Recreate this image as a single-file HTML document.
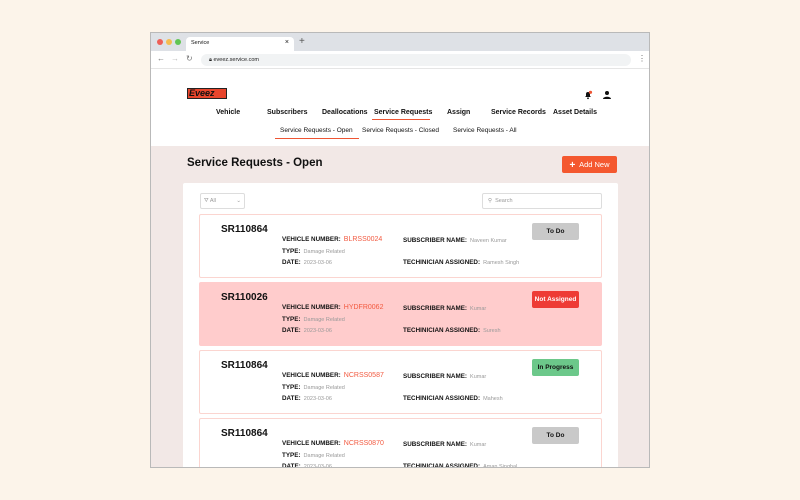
<!DOCTYPE html>
<html><head><meta charset="utf-8"><style>
*{margin:0;padding:0;box-sizing:border-box}
body{width:800px;height:500px;background:#fcf4ea;font-family:"Liberation Sans",sans-serif;position:relative;overflow:hidden;color:#111}
.a{position:absolute}
.win{left:150px;top:32px;width:500px;height:436px;border:1px solid #b9b9b9;background:#fff;overflow:hidden}
.nav{font-size:7px;font-weight:bold;top:76px}
.sub{font-size:6.5px;top:94px}
.card{left:48px;width:403px;height:64px;border:1px solid #fbd5d0;background:#fff;border-radius:2px}
.card .id{left:21px;top:9px;font-size:10px;font-weight:bold}
.l{font-size:6.3px;font-weight:bold}
.v{font-weight:normal;color:#999;font-size:5.5px;margin-left:3px}
.r{font-weight:normal;color:#f25a40;font-size:7px;margin-left:3px}
.b{left:332px;top:8px;width:47px;height:17px;border-radius:2px;font-size:6.5px;font-weight:bold;text-align:center;line-height:17px}
</style></head><body>
<div class="a win">
 <div class="a" style="left:0;top:0;width:500px;height:18px;background:#dee1e6"></div>
 <div class="a" style="left:6px;top:6px;width:6px;height:6px;border-radius:50%;background:#ee5f57"></div>
 <div class="a" style="left:15px;top:6px;width:6px;height:6px;border-radius:50%;background:#f5bd4f"></div>
 <div class="a" style="left:24px;top:6px;width:6px;height:6px;border-radius:50%;background:#61c554"></div>
 <div class="a" style="left:35px;top:4px;width:108px;height:14px;background:#fff;border-radius:4px 4px 0 0;font-size:5.5px;padding:3px 5px">Service<span style="float:right;font-size:7px;line-height:6px">×</span></div>
 <div class="a" style="left:148px;top:3px;font-size:10px;color:#555">+</div>
 <div class="a" style="left:0;top:18px;width:500px;height:18px;background:#fff;border-bottom:1px solid #e5e5e5"></div>
 <div class="a" style="left:6px;top:21px;font-size:8px;color:#777">←</div>
 <div class="a" style="left:20px;top:21px;font-size:8px;color:#bbb">→</div>
 <div class="a" style="left:35px;top:21px;font-size:8px;color:#777">↻</div>
 <div class="a" style="left:50px;top:21px;width:430px;height:12px;background:#f1f3f4;border-radius:6px;font-size:5.5px;padding:3px 8px;color:#222">🔒︎ eveez.service.com</div>
 <div class="a" style="left:487px;top:21px;font-size:8px;color:#666">⋮</div>
 <div class="a" style="left:36px;top:55px;width:40px;height:11px;background:#e8452c;border:1px solid #222;font-size:9px;font-weight:bold;font-style:italic;color:#111;line-height:9px;padding-left:1px">Eveez</div>
 <svg class="a" style="left:432px;top:57px" width="10" height="10" viewBox="0 0 10 10"><path d="M2 7h6L7 6V4a2 2 0 0 0-4 0v2z" fill="#111"/><circle cx="5" cy="8.3" r="0.9" fill="#111"/><circle cx="7.5" cy="2.3" r="1.6" fill="#e53"/></svg>
 <svg class="a" style="left:451px;top:57px" width="10" height="10" viewBox="0 0 10 10"><circle cx="5" cy="3" r="2" fill="#111"/><path d="M1 9c0-3 8-3 8 0z" fill="#111"/></svg>
 <div class="a nav" style="left:65px">Vehicle</div>
 <div class="a nav" style="left:116px">Subscribers</div>
 <div class="a nav" style="left:171px">Deallocations</div>
 <div class="a nav" style="left:223px">Service Requests</div>
 <div class="a" style="left:221px;top:86px;width:58px;height:1px;background:#e53"></div>
 <div class="a nav" style="left:296px">Assign</div>
 <div class="a nav" style="left:340px">Service Records</div>
 <div class="a nav" style="left:402px">Asset Details</div>
 <div class="a sub" style="left:129px">Service Requests - Open</div>
 <div class="a" style="left:124px;top:105px;width:84px;height:1px;background:#e53"></div>
 <div class="a sub" style="left:211px">Service Requests - Closed</div>
 <div class="a sub" style="left:302px">Service Requests - All</div>
 <div class="a" style="left:0;top:113px;width:500px;height:330px;background:#f2e8e6"></div>
 <div class="a" style="left:36px;top:124px;font-size:11.5px;font-weight:bold">Service Requests - Open</div>
 <div class="a" style="left:411px;top:123px;width:55px;height:17px;background:#f4582f;border-radius:2px;color:#fff;font-size:7.5px;line-height:17px;text-align:center"><b style="font-size:10px;vertical-align:-1px">+</b>&nbsp; Add New</div>
 <div class="a" style="left:32px;top:150px;width:435px;height:300px;background:#fff;border-radius:2px"></div>
 <div class="a" style="left:49px;top:160px;width:45px;height:16px;border:1px solid #ddd;border-radius:2px;font-size:5.5px;color:#999;padding:4px 3px">⛛ All<span style="float:right">⌄</span></div>
 <div class="a" style="left:331px;top:160px;width:120px;height:16px;border:1px solid #ddd;border-radius:2px;font-size:5.5px;color:#999;padding:4px 5px">⚲ &nbsp;Search</div>

 <div class="a card" style="top:181px"><div class="a id">SR110864</div>
  <div class="a l" style="left:82px;top:21px">VEHICLE NUMBER:<span class="r">BLRSS0024</span></div>
  <div class="a l" style="left:82px;top:33px">TYPE:<span class="v">Damage Related</span></div>
  <div class="a l" style="left:82px;top:44px">DATE:<span class="v">2023-03-06</span></div>
  <div class="a l" style="left:203px;top:22px">SUBSCRIBER NAME:<span class="v">Naveen Kumar</span></div>
  <div class="a l" style="left:203px;top:44px">TECHINICIAN ASSIGNED:<span class="v">Ramesh Singh</span></div>
  <div class="a b" style="background:#c9c9c9">To Do</div></div>

 <div class="a card" style="top:249px;background:#ffcccc;border-color:#ffcccc"><div class="a id">SR110026</div>
  <div class="a l" style="left:82px;top:21px">VEHICLE NUMBER:<span class="r">HYDFR0062</span></div>
  <div class="a l" style="left:82px;top:33px">TYPE:<span class="v">Damage Related</span></div>
  <div class="a l" style="left:82px;top:44px">DATE:<span class="v">2023-03-06</span></div>
  <div class="a l" style="left:203px;top:22px">SUBSCRIBER NAME:<span class="v">Kumar</span></div>
  <div class="a l" style="left:203px;top:44px">TECHINICIAN ASSIGNED:<span class="v">Suresh</span></div>
  <div class="a b" style="background:#ee3b35;color:#fff">Not Assigned</div></div>

 <div class="a card" style="top:317px"><div class="a id">SR110864</div>
  <div class="a l" style="left:82px;top:21px">VEHICLE NUMBER:<span class="r">NCRSS0587</span></div>
  <div class="a l" style="left:82px;top:33px">TYPE:<span class="v">Damage Related</span></div>
  <div class="a l" style="left:82px;top:44px">DATE:<span class="v">2023-03-06</span></div>
  <div class="a l" style="left:203px;top:22px">SUBSCRIBER NAME:<span class="v">Kumar</span></div>
  <div class="a l" style="left:203px;top:44px">TECHINICIAN ASSIGNED:<span class="v">Mahesh</span></div>
  <div class="a b" style="background:#6cc88a">In Progress</div></div>

 <div class="a card" style="top:385px"><div class="a id">SR110864</div>
  <div class="a l" style="left:82px;top:21px">VEHICLE NUMBER:<span class="r">NCRSS0870</span></div>
  <div class="a l" style="left:82px;top:33px">TYPE:<span class="v">Damage Related</span></div>
  <div class="a l" style="left:82px;top:44px">DATE:<span class="v">2023-03-06</span></div>
  <div class="a l" style="left:203px;top:22px">SUBSCRIBER NAME:<span class="v">Kumar</span></div>
  <div class="a l" style="left:203px;top:44px">TECHINICIAN ASSIGNED:<span class="v">Aman Singhal</span></div>
  <div class="a b" style="background:#c9c9c9">To Do</div></div>
</div>
</body></html>
